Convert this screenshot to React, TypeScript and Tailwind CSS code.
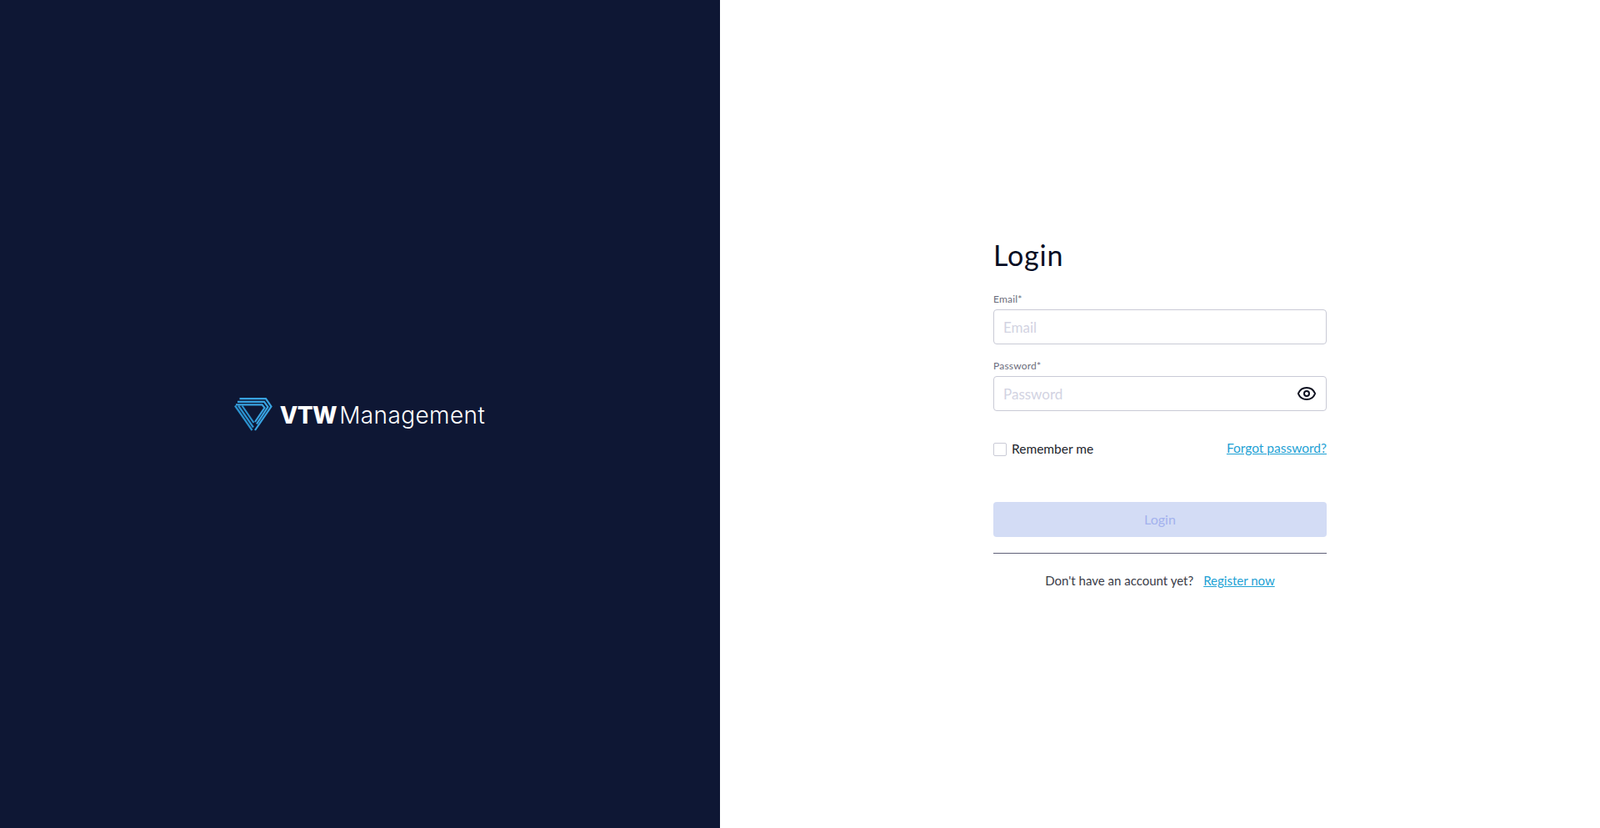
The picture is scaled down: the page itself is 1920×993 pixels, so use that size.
import React from 'react';
import { Eye } from 'lucide-react';

const Logo = () => (
  <div className="flex items-center">
    {/* triangle mark */}
    <svg width="46" height="40" viewBox="0 0 46 40" fill="none" className="mr-[9px] -ml-[1px]">
      <g stroke="#38a2e0" strokeWidth="2.2">
        <path d="M6.5 1.2 H38 L44.5 10.5 L25 39" />
        <path d="M4 4.8 H36 L40.5 11 L27 31.5" />
        <path d="M2 8.4 H33.5 L36.5 12 L25 29" />
      </g>
      <g stroke="#2c93d0" strokeWidth="2.2">
        <path d="M1 9.5 L21.5 39" />
        <path d="M5 9.5 L23 35.5" />
        <path d="M9.5 9.5 L23.5 30" />
      </g>
    </svg>
    <span className="font-['Inter',sans-serif] font-extrabold text-white text-[28px] leading-none tracking-[-0.6px] mr-[3px] pt-[2px]">VTW</span>
    <span className="font-['Inter',sans-serif] font-light text-white text-[28px] leading-none tracking-[0.4px] pt-[2px]">Management</span>
  </div>
);

export default function App() {
  return (
    <div className="flex h-[993px] w-full bg-white font-['Lato',sans-serif]">
      <div className="flex w-[864px] items-center justify-center bg-[#0e1734]">
        <Logo />
      </div>
      <div className="flex flex-1 items-center justify-center">
        <div className="w-[400px] pb-[2px]">
          <h1 className="text-[34px] leading-[45px] font-normal tracking-[0.8px] text-[#060d24] mb-[23px]">Login</h1>

          <label className="block text-[12px] leading-[16px] tracking-[0.2px] text-[#6b6d7c] mb-[4px]">Email*</label>
          <input
            placeholder="Email"
            className="block w-full h-[42px] rounded border border-[#c9cad6] px-[11px] pt-[1px] text-[17px] placeholder:text-[#d2d3e2] mb-[18px]"
          />

          <label className="block text-[12px] leading-[16px] tracking-[0.2px] text-[#6b6d7c] mb-[4px]">Password*</label>
          <div className="relative mb-[34px]">
            <input
              placeholder="Password"
              className="block w-full h-[42px] rounded border border-[#c9cad6] px-[11px] pt-[1px] text-[17px] placeholder:text-[#d2d3e2]"
            />
            <Eye size={24} strokeWidth={2} className="absolute right-[12px] top-[9px] text-[#0e1020]" />
          </div>

          <div className="flex items-center justify-between mb-[52px]">
            <label className="flex items-center gap-[6px] text-[15.5px] text-[#1d1f2c]">
              <span className="h-[16px] w-[16px] rounded-[2px] border border-[#c9cad6] bg-white" />
              Remember me
            </label>
            <a className="text-[15.5px] text-[#1da1d4] underline -mt-[2px]">Forgot password?</a>
          </div>

          <button className="block w-full h-[42px] rounded bg-[#d3dcf5] text-[16px] text-[#a3b2ee]">Login</button>
          <div className="mt-[19px] h-px bg-[#5f6078]" />

          <div className="mt-[21px] flex items-center justify-center gap-[12px] text-[15px]">
            <span className="text-[#3a3c48] -mt-[1px]">Don't have an account yet?</span>
            <a className="text-[#1da1d4] underline">Register now</a>
          </div>
        </div>
      </div>
    </div>
  );
}
